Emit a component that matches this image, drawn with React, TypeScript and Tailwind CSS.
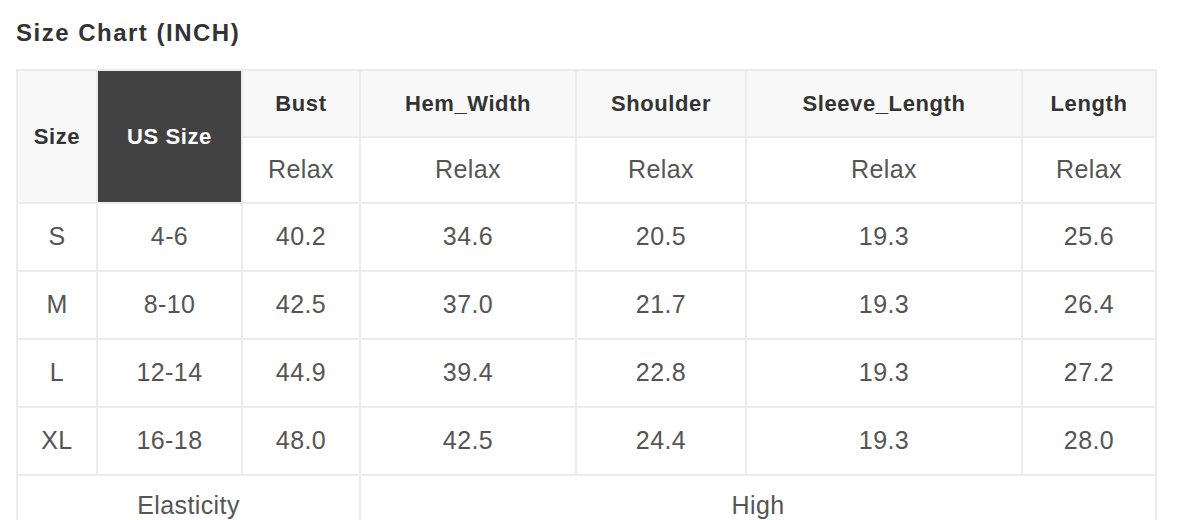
const heads = ['Bust', 'Hem_Width', 'Shoulder', 'Sleeve_Length', 'Length'];

const rows = [
  ['S', '4-6', '40.2', '34.6', '20.5', '19.3', '25.6'],
  ['M', '8-10', '42.5', '37.0', '21.7', '19.3', '26.4'],
  ['L', '12-14', '44.9', '39.4', '22.8', '19.3', '27.2'],
  ['XL', '16-18', '48.0', '42.5', '24.4', '19.3', '28.0'],
];

export default function App() {
  return (
    <div className="w-[1179px] h-[520px] overflow-hidden bg-white font-['Liberation_Sans',Arial,sans-serif]">
      <div className="pl-[16px] pt-[18px] h-[69px]">
        <h1 className="text-[24px] leading-[30px] font-bold tracking-[1.5px] text-[#333]">Size Chart (INCH)</h1>
      </div>
      <table className="ml-[16px] table-fixed border-collapse text-center">
        <colgroup>
          <col className="w-[80px]" />
          <col className="w-[145px]" />
          <col className="w-[118px]" />
          <col className="w-[216px]" />
          <col className="w-[170px]" />
          <col className="w-[276px]" />
          <col className="w-[134px]" />
        </colgroup>
        <thead>
          <tr className="h-[67px]">
            <th rowSpan={2} className="border-2 border-[#ececec] bg-[#f8f8f8] text-[22px] font-bold tracking-[0.6px] text-[#333]">Size</th>
            <th rowSpan={2} className="border-2 border-[#ececec] bg-[#424242] text-[22px] font-bold tracking-[0.6px] text-white">US Size</th>
            {heads.map((h) => (
              <th key={h} className="border-2 border-[#ececec] bg-[#f8f8f8] text-[22px] font-bold tracking-[0.6px] text-[#333]">{h}</th>
            ))}
          </tr>
          <tr className="h-[66px]">
            {heads.map((h) => (
              <td key={h} className="border-2 border-[#ececec] bg-white text-[25px] tracking-[0.4px] text-[#555]">Relax</td>
            ))}
          </tr>
        </thead>
        <tbody>
          {rows.map((r) => (
            <tr key={r[0]} className="h-[68px]">
              {r.map((c, i) => (
                <td key={i} className="border-2 border-[#ececec] text-[25px] tracking-[0.4px] text-[#555]">{c}</td>
              ))}
            </tr>
          ))}
          <tr className="h-[62px]">
            <td colSpan={3} className="border-2 border-[#ececec] text-[25px] tracking-[0.4px] text-[#555]">Elasticity</td>
            <td colSpan={4} className="border-2 border-[#ececec] text-[25px] tracking-[0.4px] text-[#555]">High</td>
          </tr>
        </tbody>
      </table>
    </div>
  );
}
